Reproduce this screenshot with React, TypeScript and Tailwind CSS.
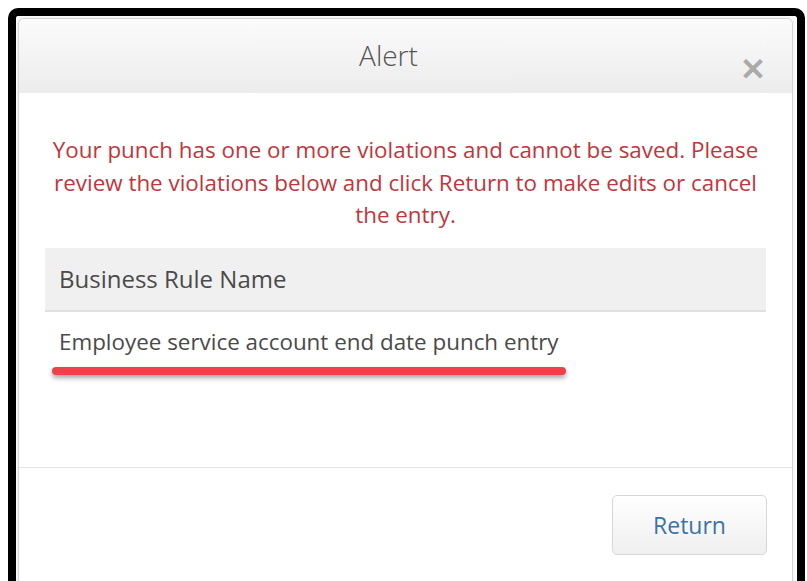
import React from 'react';

const font = { fontFamily: '"Open Sans", "Noto Sans", sans-serif' };

export default function App() {
  return (
    <div className="w-[807px] h-[581px] bg-white overflow-hidden pl-2 pt-2" style={font}>
      {/* black frame around the dialog */}
      <div className="w-[797px] h-[573px] border-black border-l-8 border-t-8 border-r-8 rounded-t-[10px] pl-[2px] pr-[4px] pt-[2px]">
        <div className="h-[575px] rounded-[6px] border border-[#d6d6d6] bg-white flex flex-col shadow-[0_0_3px_rgba(0,0,0,0.15)]">
          <div className="relative h-[74px] shrink-0 rounded-t-[6px] bg-gradient-to-b from-[#fbfbfb] to-[#ececec] flex items-center justify-center pr-[34px]">
            <span className="text-[28px] font-light text-[#555] leading-none -mt-[2px]">Alert</span>
            <span className="absolute right-[26px] top-[34px] text-[#aaa] text-[31px] font-bold leading-none">✕</span>
          </div>

          <div className="h-[375px] shrink-0 px-[26px] pt-[41px] border-b border-[#e3e3e3]">
            <p className="text-center text-[22.4px] leading-[32.5px] text-[#c0363d] px-[4px]">
              Your punch has one or more violations and cannot be saved. Please review the violations below and click Return to make edits or cancel the entry.
            </p>
            <div className="mt-[16px] h-[64px] bg-[#f0f0f0] border-b-2 border-[#e0e0e0] flex items-center pl-[14px]">
              <span className="text-[24px] text-[#4a4a4a]">Business Rule Name</span>
            </div>
            <div className="relative pl-[14px] pt-[15px]">
              <span className="block text-[22.4px] leading-[30px] text-[#4a4a4a]">Employee service account end date punch entry</span>
              <div className="absolute left-[7px] top-[55px] w-[514px] h-[8px] rounded-full bg-[#f2404a] shadow-[0_3px_5px_rgba(0,0,0,0.35)]" />
            </div>
          </div>

          <div className="flex-1 flex justify-end items-start pt-[27px] pr-[25px]">
            <button className="w-[155px] h-[60px] rounded-[5px] border border-[#d8d8d8] bg-gradient-to-b from-white to-[#efefef] text-[23px] text-[#3d72a6]">
              Return
            </button>
          </div>
        </div>
      </div>
    </div>
  );
}
